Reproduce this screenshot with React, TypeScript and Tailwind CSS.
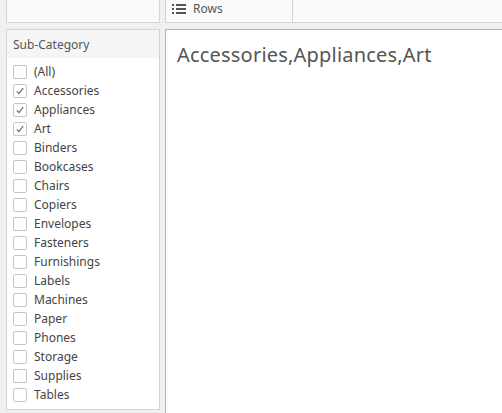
import React from 'react';

const items = [
  { label: '(All)', checked: false },
  { label: 'Accessories', checked: true },
  { label: 'Appliances', checked: true },
  { label: 'Art', checked: true },
  { label: 'Binders', checked: false },
  { label: 'Bookcases', checked: false },
  { label: 'Chairs', checked: false },
  { label: 'Copiers', checked: false },
  { label: 'Envelopes', checked: false },
  { label: 'Fasteners', checked: false },
  { label: 'Furnishings', checked: false },
  { label: 'Labels', checked: false },
  { label: 'Machines', checked: false },
  { label: 'Paper', checked: false },
  { label: 'Phones', checked: false },
  { label: 'Storage', checked: false },
  { label: 'Supplies', checked: false },
  { label: 'Tables', checked: false },
];

function Checkbox({ checked }: { checked: boolean }) {
  return (
    <div className="w-[14px] h-[14px] border border-[#c6c6c6] rounded-[2px] bg-white flex items-center justify-center shrink-0">
      {checked && (
        <svg width="10" height="10" viewBox="0 0 10 10">
          <path d="M1.8 5.4 L4 7.6 L8.2 2" fill="none" stroke="#666" strokeWidth="1.2" />
        </svg>
      )}
    </div>
  );
}

export default function App() {
  return (
    <div
      className="w-[502px] h-[413px] bg-[#f0f0f0] overflow-hidden flex flex-col"
      style={{ fontFamily: '"Noto Sans", "Open Sans", sans-serif' }}
    >
      <div className="flex h-[23px] shrink-0">
        <div className="ml-[6px] w-[154px] border-x border-b border-[#d4d4d4] bg-[#fafafa]" />
        <div className="ml-[5px] flex-1 flex border-l border-b border-[#d4d4d4] bg-[#fafafa]">
          <div className="w-[127px] border-r border-[#d4d4d4] flex items-center pl-[6px] gap-[7px]">
            <svg width="14" height="12" viewBox="0 0 14 12" className="mb-[4px]">
              <rect x="0" y="1" width="2" height="2" fill="#555" />
              <rect x="4" y="1" width="10" height="2" fill="#555" />
              <rect x="0" y="5" width="2" height="2" fill="#555" />
              <rect x="4" y="5" width="10" height="2" fill="#555" />
              <rect x="0" y="9" width="2" height="2" fill="#555" />
              <rect x="4" y="9" width="10" height="2" fill="#555" />
            </svg>
            <span className="text-[12px] text-[#555] leading-none mb-[5px]">Rows</span>
          </div>
        </div>
      </div>
      <div className="flex flex-1 mt-[6px]">
        <div className="ml-[6px] w-[154px] h-[381px] border border-[#d4d4d4] bg-white flex flex-col">
          <div className="h-[28px] bg-[#f5f5f5] pl-[6px] pt-[2px] flex items-center text-[12px] text-[#555]">
            Sub-Category
          </div>
          <div className="flex flex-col pl-[6px] pt-[4px]">
            {items.map((it) => (
              <div key={it.label} className="h-[19px] flex items-center gap-[7px]">
                <Checkbox checked={it.checked} />
                <span className="text-[12px] text-[#444] leading-none">{it.label}</span>
              </div>
            ))}
          </div>
        </div>
        <div className="ml-[5px] flex-1 border-l border-t border-[#b4b4b4] bg-white pl-[11px] pt-[12px]">
          <div className="text-[20px] text-[#555] leading-[26px] tracking-[0.2px]">Accessories,Appliances,Art</div>
        </div>
      </div>
    </div>
  );
}
